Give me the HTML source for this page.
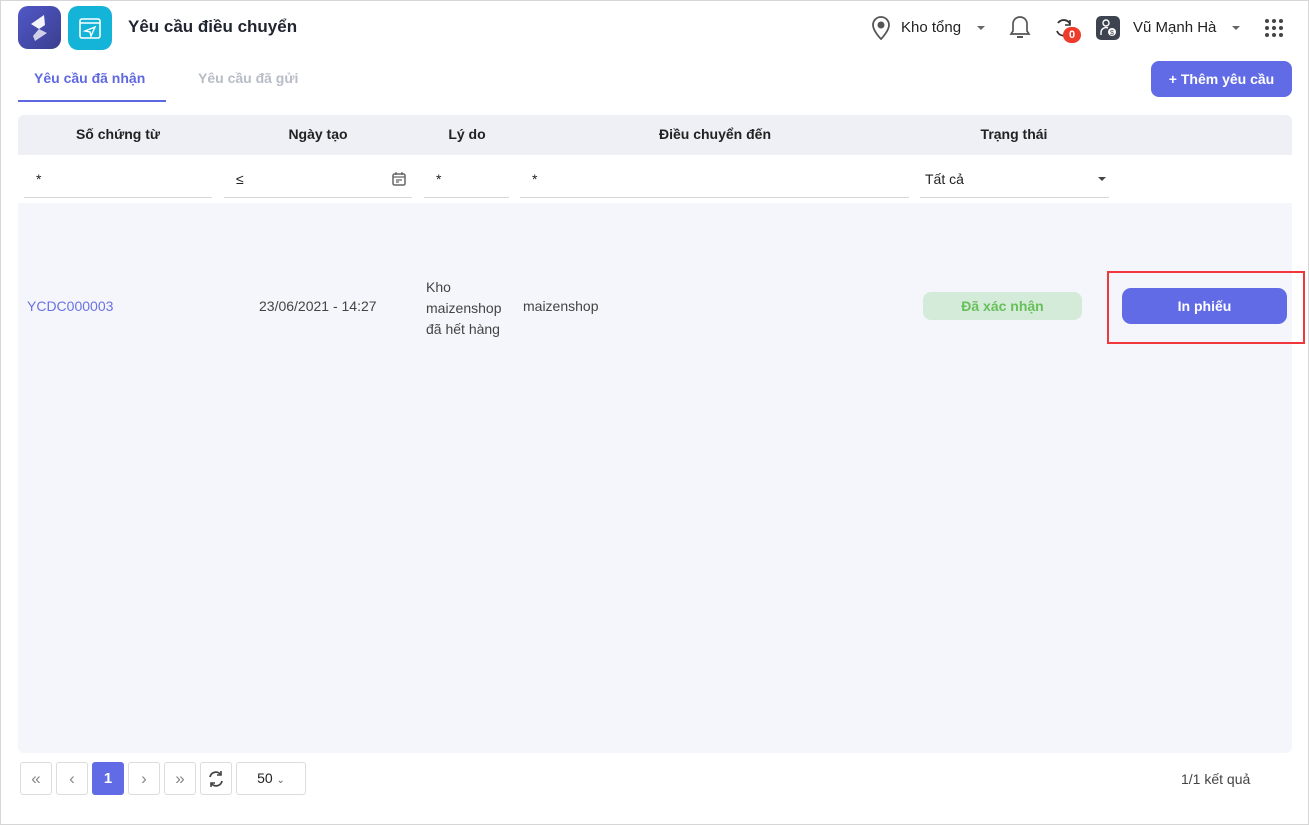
<!DOCTYPE html>
<html><head><meta charset="utf-8"><style>
*{box-sizing:border-box;margin:0;padding:0}
body{width:1309px;height:825px;background:#fff;font-family:"Liberation Sans",sans-serif;color:#222;position:relative;overflow:hidden;font-size:14px}
.frame{position:absolute;left:0;top:0;width:1309px;height:825px;border:1px solid #d6d6d6}
.abs{position:absolute}
.logo1{left:18px;top:6px;width:43px;height:43px;border-radius:10px;background:linear-gradient(135deg,#5058c8,#3b3f8f)}
.logo2{left:68px;top:6px;width:44px;height:44px;border-radius:10px;background:#14b3d8}
.title{left:128px;top:17px;font-size:17px;font-weight:bold;color:#1f2430}
.tab1{left:34px;top:70px;font-size:14px;font-weight:bold;color:#5f68e0}
.tabline{left:18px;top:100px;width:148px;height:2px;background:#5f68e0}
.tab2{left:198px;top:70px;font-size:14px;font-weight:bold;color:#b8bcc6}
.btn{background:#626be6;color:#fff;font-weight:bold;border-radius:8px;text-align:center}
.hdr{left:18px;top:115px;width:1274px;height:40px;background:#eff0f6;border-radius:6px 6px 0 0}
.th{top:126px;font-size:14px;font-weight:bold;color:#222;text-align:center}
.inp{top:155px;height:43px;border-bottom:1px solid #d8d8d8;font-size:14px;padding:16px 0 0 12px;color:#222}
.body{left:18px;top:203px;width:1274px;height:550px;background:#f5f6fb;border-radius:0 0 6px 6px}
.pg{top:762px;width:32px;height:33px;border:1px solid #dcdcdc;border-radius:3px;text-align:center;line-height:31px;color:#888;font-size:17px;background:#fff}
</style></head><body>
<div class="frame"></div>
<div class="abs logo1"><svg width="43" height="43" viewBox="0 0 43 43"><path d="M26 9 L13 18 L21 23 L27 19 Z" fill="#fff" opacity=".95"/><path d="M21 23 L29 27 L17 35 L15 30 Z" fill="#fff" opacity=".75"/></svg></div>
<div class="abs logo2"><svg width="44" height="44" viewBox="0 0 44 44"><rect x="12" y="13" width="20" height="19" rx="2" fill="none" stroke="#fff" stroke-width="1.6"/><path d="M12 17 H32" stroke="#fff" stroke-width="1.4"/><path d="M17 25 L27 21 L23 30 L22 26 Z" fill="none" stroke="#fff" stroke-width="1.4"/></svg></div>
<div class="abs title">Yêu cầu điều chuyển</div>

<svg class="abs" style="left:870px;top:15px" width="22" height="26" viewBox="0 0 22 26"><path d="M11 2C6 2 3 6 3 10c0 6 8 14 8 14s8-8 8-14c0-4-3-8-8-8z" fill="none" stroke="#555" stroke-width="1.8"/><circle cx="11" cy="10" r="3.5" fill="#555"/></svg>
<div class="abs" style="left:901px;top:19px;font-size:15px">Kho tổng</div>
<div class="abs" style="left:977px;top:26px;border:4px solid transparent;border-top-color:#666"></div>
<svg class="abs" style="left:1008px;top:14px" width="24" height="28" viewBox="0 0 24 28"><path d="M12 3c-4 0-7 3-7 7v7l-2 3h18l-2-3v-7c0-4-3-7-7-7z" fill="none" stroke="#555" stroke-width="1.7"/><path d="M9 23h6" stroke="#555" stroke-width="2"/></svg>
<svg class="abs" style="left:1053px;top:16px" width="22" height="24" viewBox="0 0 22 24"><path d="M17 8A7 7 0 0 0 5 7M4 15a7 7 0 0 0 12 2" fill="none" stroke="#333" stroke-width="1.8"/><path d="M17 4v5h-5" fill="none" stroke="#333" stroke-width="1.6"/></svg>
<div class="abs" style="left:1063px;top:27px;width:18px;height:16px;border-radius:8px;background:#ef3b2c;color:#fff;font-size:11px;font-weight:bold;text-align:center;line-height:16px">0</div>
<div class="abs" style="left:1096px;top:16px;width:24px;height:24px;border-radius:5px;background:#3d4450"><svg width="24" height="24" viewBox="0 0 24 24"><circle cx="10" cy="7" r="3" fill="none" stroke="#fff" stroke-width="1.4"/><path d="M5 19v-3a5 5 0 0 1 7-4" fill="none" stroke="#fff" stroke-width="1.4"/><circle cx="16" cy="16" r="4" fill="#fff"/><text x="16" y="19" font-size="7" text-anchor="middle" fill="#3d4450" font-family="Liberation Sans">$</text></svg></div>
<div class="abs" style="left:1133px;top:19px;font-size:15px">Vũ Mạnh Hà</div>
<div class="abs" style="left:1232px;top:26px;border:4px solid transparent;border-top-color:#666"></div>
<svg class="abs" style="left:1264px;top:18px" width="20" height="20" viewBox="0 0 20 20" fill="#444"><circle cx="3" cy="3" r="2"/><circle cx="10" cy="3" r="2"/><circle cx="17" cy="3" r="2"/><circle cx="3" cy="10" r="2"/><circle cx="10" cy="10" r="2"/><circle cx="17" cy="10" r="2"/><circle cx="3" cy="17" r="2"/><circle cx="10" cy="17" r="2"/><circle cx="17" cy="17" r="2"/></svg>

<div class="abs tab1">Yêu cầu đã nhận</div>
<div class="abs tabline"></div>
<div class="abs tab2">Yêu cầu đã gửi</div>
<div class="abs btn" style="left:1151px;top:61px;width:141px;height:36px;line-height:36px;font-size:14px">+ Thêm yêu cầu</div>

<div class="abs hdr"></div>
<div class="abs th" style="left:18px;width:200px">Số chứng từ</div>
<div class="abs th" style="left:218px;width:200px">Ngày tạo</div>
<div class="abs th" style="left:418px;width:98px">Lý do</div>
<div class="abs th" style="left:516px;width:398px">Điều chuyển đến</div>
<div class="abs th" style="left:914px;width:200px">Trạng thái</div>

<div class="abs inp" style="left:24px;width:188px">*</div>
<div class="abs inp" style="left:224px;width:188px">≤</div>
<svg class="abs" style="left:391px;top:171px" width="16" height="16" viewBox="0 0 16 16"><rect x="2" y="3" width="12" height="11" rx="1.5" fill="none" stroke="#666" stroke-width="1.5"/><path d="M2 6h12M5 1v3M11 1v3M5 9h6M5 11h3" stroke="#666" stroke-width="1.3"/></svg>
<div class="abs inp" style="left:424px;width:85px">*</div>
<div class="abs inp" style="left:520px;width:389px">*</div>
<div class="abs inp" style="left:920px;width:189px;padding-left:5px">Tất cả</div>
<div class="abs" style="left:1098px;top:177px;border:4px solid transparent;border-top-color:#444"></div>

<div class="abs body"></div>
<div class="abs" style="left:27px;top:298px;color:#6a72e4;font-size:14px">YCDC000003</div>
<div class="abs" style="left:259px;top:298px;color:#444;font-size:14px">23/06/2021 - 14:27</div>
<div class="abs" style="left:426px;top:277px;color:#444;font-size:14px;line-height:21px">Kho<br>maizenshop<br>đã hết hàng</div>
<div class="abs" style="left:523px;top:298px;color:#444;font-size:14px">maizenshop</div>
<div class="abs" style="left:923px;top:292px;width:159px;height:28px;border-radius:8px;background:#d5ebd9;color:#67c05a;font-weight:bold;text-align:center;line-height:28px">Đã xác nhận</div>
<div class="abs" style="left:1107px;top:271px;width:198px;height:73px;border:2px solid #f1373c"></div>
<div class="abs btn" style="left:1122px;top:288px;width:165px;height:36px;line-height:36px;font-size:14px;border-radius:9px">In phiếu</div>

<div class="abs pg" style="left:20px">«</div>
<div class="abs pg" style="left:56px">‹</div>
<div class="abs pg" style="left:92px;background:#626be6;border-color:#626be6;color:#fff;font-weight:bold;font-size:15px">1</div>
<div class="abs pg" style="left:128px">›</div>
<div class="abs pg" style="left:164px">»</div>
<div class="abs pg" style="left:200px"><svg width="20" height="20" viewBox="0 0 20 20" style="margin-top:6px"><path d="M15 6A6 6 0 0 0 4 8M5 14a6 6 0 0 0 11-2" fill="none" stroke="#444" stroke-width="1.8"/><path d="M15 2v4h-4M5 18v-4h4" fill="none" stroke="#444" stroke-width="1.6"/></svg></div>
<div class="abs pg" style="left:236px;width:70px;color:#222;font-size:14px">50 <span style="font-size:10px;color:#666">&#8964;</span></div>
<div class="abs" style="left:1181px;top:771px;font-size:14px;color:#444">1/1 kết quả</div>
</body></html>
